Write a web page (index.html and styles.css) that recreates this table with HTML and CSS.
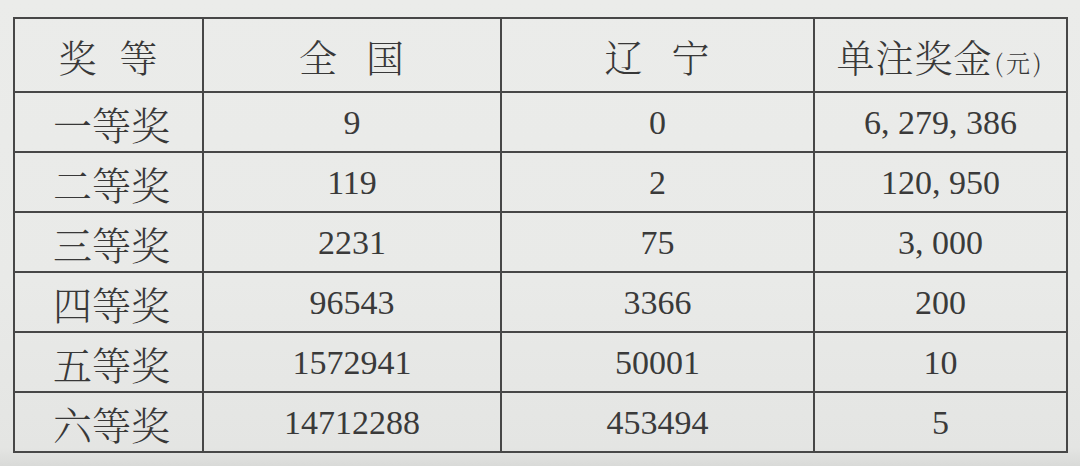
FILE: index.html
```html
<!DOCTYPE html>
<html lang="zh-CN">
<head>
<meta charset="utf-8">
<title>奖等</title>
<link rel="stylesheet" href="styles.css">
</head>
<body>
<div class="sheet">
  <table class="prize">
    <colgroup>
      <col class="c1"><col class="c2"><col class="c3"><col class="c4">
    </colgroup>
    <thead>
      <tr>
        <th><span class="sp">奖</span>等</th>
        <th><span class="sp wide">全</span>国</th>
        <th><span class="sp wide">辽</span>宁</th>
        <th>单注奖金<span class="unit">(元)</span></th>
      </tr>
    </thead>
    <tbody>
      <tr><td class="lbl">一等奖</td><td>9</td><td>0</td><td>6, 279, 386</td></tr>
      <tr><td class="lbl">二等奖</td><td>119</td><td>2</td><td>120, 950</td></tr>
      <tr><td class="lbl">三等奖</td><td>2231</td><td>75</td><td>3, 000</td></tr>
      <tr><td class="lbl">四等奖</td><td>96543</td><td>3366</td><td>200</td></tr>
      <tr><td class="lbl">五等奖</td><td>1572941</td><td>50001</td><td>10</td></tr>
      <tr><td class="lbl">六等奖</td><td>14712288</td><td>453494</td><td>5</td></tr>
    </tbody>
  </table>
</div>
</body>
</html>
```

FILE: styles.css
```css
html, body {
  margin: 0;
  padding: 0;
}
body {
  width: 1080px;
  height: 466px;
  overflow: hidden;
  background: linear-gradient(180deg, #ebecea 0%, #e9eae8 60%, #e4e5e3 96%, #d9dad8 100%);
}
.sheet {
  padding: 17px 0 0 13px;
}
.prize {
  border-collapse: collapse;
  table-layout: fixed;
  width: 1053px;
  border: 2px solid #3e3e3e;
  color: #2f2f2f;
}
.c1 { width: 189px; }
.c2 { width: 298px; }
.c3 { width: 313px; }
.c4 { width: 253px; }
.prize th,
.prize td {
  border: 2px solid #474747;
  padding: 0;
  text-align: center;
  vertical-align: middle;
}
.prize th {
  height: 72px;
  font-family: "Noto Serif CJK SC", "Noto Sans CJK SC", sans-serif;
  font-weight: 300;
  font-size: 38px;
  color: #383838;
  letter-spacing: 1px;
}
.prize td {
  height: 56px;
  font-family: "Liberation Serif", "Noto Sans CJK SC", serif;
  font-size: 34px;
  color: #3a3a3a;
  padding-top: 2px;
}
.prize td.lbl {
  font-family: "Noto Serif CJK SC", "Noto Sans CJK SC", sans-serif;
  font-weight: 300;
  font-size: 39px;
  color: #383838;
  padding-left: 6px;
}
.sp { margin-right: 22px; }
.sp.wide { margin-right: 28px; }
.unit {
  font-size: 24px;
  letter-spacing: 3px;
  margin-left: 2px;
}
```
